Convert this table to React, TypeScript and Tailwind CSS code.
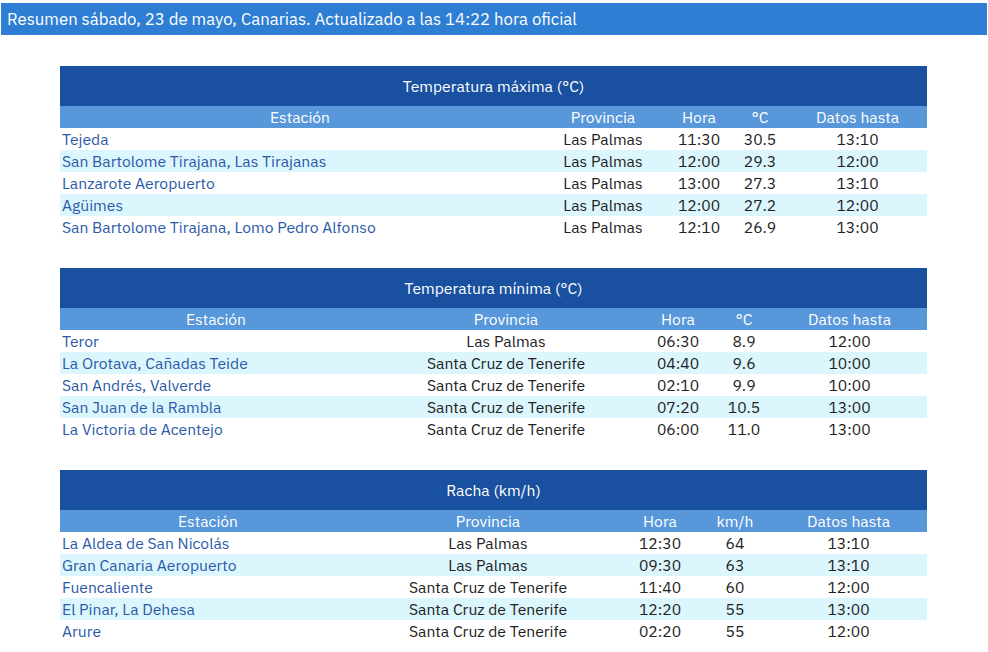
type Col = { label: string; width: string }
type Row = string[]

const font = { fontFamily: '"IBM Plex Sans", "Noto Sans", "Liberation Sans", sans-serif' }

const TABLES: { title: string; cols: Col[]; rows: Row[] }[] = [
  {
    title: 'Temperatura máxima (°C)',
    cols: [
      { label: 'Estación', width: 'w-[480px]' },
      { label: 'Provincia', width: 'w-[126px]' },
      { label: 'Hora', width: 'w-[66px]' },
      { label: '°C', width: 'w-[56px]' },
      { label: 'Datos hasta', width: 'w-[139px]' },
    ],
    rows: [
      ['Tejeda', 'Las Palmas', '11:30', '30.5', '13:10'],
      ['San Bartolome Tirajana, Las Tirajanas', 'Las Palmas', '12:00', '29.3', '12:00'],
      ['Lanzarote Aeropuerto', 'Las Palmas', '13:00', '27.3', '13:10'],
      ['Agüimes', 'Las Palmas', '12:00', '27.2', '12:00'],
      ['San Bartolome Tirajana, Lomo Pedro Alfonso', 'Las Palmas', '12:10', '26.9', '13:00'],
    ],
  },
  {
    title: 'Temperatura mínima (°C)',
    cols: [
      { label: 'Estación', width: 'w-[312px]' },
      { label: 'Provincia', width: 'w-[268px]' },
      { label: 'Hora', width: 'w-[76px]' },
      { label: '°C', width: 'w-[56px]' },
      { label: 'Datos hasta', width: 'w-[155px]' },
    ],
    rows: [
      ['Teror', 'Las Palmas', '06:30', '8.9', '12:00'],
      ['La Orotava, Cañadas Teide', 'Santa Cruz de Tenerife', '04:40', '9.6', '10:00'],
      ['San Andrés, Valverde', 'Santa Cruz de Tenerife', '02:10', '9.9', '10:00'],
      ['San Juan de la Rambla', 'Santa Cruz de Tenerife', '07:20', '10.5', '13:00'],
      ['La Victoria de Acentejo', 'Santa Cruz de Tenerife', '06:00', '11.0', '13:00'],
    ],
  },
  {
    title: 'Racha (km/h)',
    cols: [
      { label: 'Estación', width: 'w-[296px]' },
      { label: 'Provincia', width: 'w-[264px]' },
      { label: 'Hora', width: 'w-[80px]' },
      { label: 'km/h', width: 'w-[70px]' },
      { label: 'Datos hasta', width: 'w-[157px]' },
    ],
    rows: [
      ['La Aldea de San Nicolás', 'Las Palmas', '12:30', '64', '13:10'],
      ['Gran Canaria Aeropuerto', 'Las Palmas', '09:30', '63', '13:10'],
      ['Fuencaliente', 'Santa Cruz de Tenerife', '11:40', '60', '12:00'],
      ['El Pinar, La Dehesa', 'Santa Cruz de Tenerife', '12:20', '55', '13:00'],
      ['Arure', 'Santa Cruz de Tenerife', '02:20', '55', '12:00'],
    ],
  },
]

function SummaryTable({ title, cols, rows }: { title: string; cols: Col[]; rows: Row[] }) {
  return (
    <table className="w-[867px] table-fixed border-collapse text-[15.7px] leading-[22px]">
      <colgroup>
        {cols.map((c) => (
          <col key={c.label} className={c.width} />
        ))}
      </colgroup>
      <thead>
        <tr className="bg-[#1a50a0] text-white">
          <th colSpan={5} className="h-[40px] p-0 font-normal">{title}</th>
        </tr>
        <tr className="bg-[#5797da] text-white">
          {cols.map((c) => (
            <th key={c.label} className="h-[22px] p-0 font-normal">{c.label}</th>
          ))}
        </tr>
      </thead>
      <tbody>
        {rows.map((r, i) => (
          <tr key={i} className={i % 2 === 1 ? 'bg-[#dcf6fd]' : 'bg-white'}>
            <td className="h-[22px] p-0 pl-[2px] text-left text-[#2d5aa8] whitespace-nowrap">{r[0]}</td>
            {r.slice(1).map((v, j) => (
              <td key={j} className="h-[22px] p-0 text-center text-[#222] whitespace-nowrap">{v}</td>
            ))}
          </tr>
        ))}
      </tbody>
    </table>
  )
}

export default function App() {
  return (
    <div className="min-h-screen bg-white pt-[3px]" style={font}>
      <div className="mx-[1px] h-[32px] bg-[#2e7ed3] pl-[6px] text-[16.75px] leading-[32px] text-white">
        Resumen sábado, 23 de mayo, Canarias. Actualizado a las 14:22 hora oficial
      </div>
      <div className="flex flex-col gap-[30px] pl-[60px] pt-[31px]">
        {TABLES.map((t) => (
          <SummaryTable key={t.title} {...t} />
        ))}
      </div>
    </div>
  )
}
